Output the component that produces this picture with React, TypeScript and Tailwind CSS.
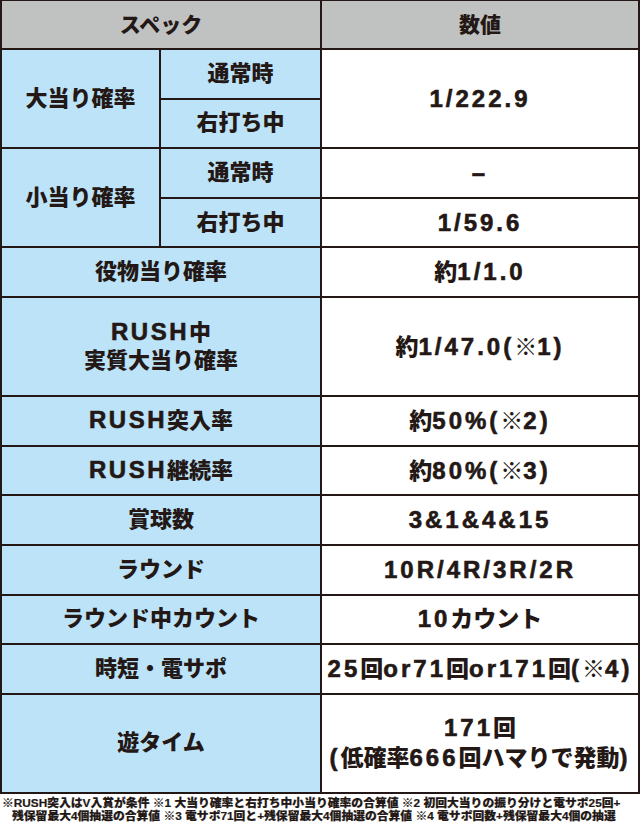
import type { ReactNode } from 'react';

const FONT = { fontFamily: '"Liberation Sans", "Noto Sans CJK JP", sans-serif' };

// Latin run inside a value cell: wider tracking like the print font
function L({ children }: { children: ReactNode }) {
  return <span className="text-[24px] tracking-[3px] [-webkit-text-stroke:0.6px_#231815]">{children}</span>;
}

function Head({ children, className = '' }: { children: ReactNode; className?: string }) {
  return (
    <div className={`flex items-center justify-center bg-[#c0c1c1] text-[21px] font-black ${className}`}>
      {children}
    </div>
  );
}

function Label({ children, className = '' }: { children: ReactNode; className?: string }) {
  return (
    <div className={`flex items-center justify-center bg-[#bce3f8] text-center text-[22px] font-black leading-[28px] ${className}`}>
      {children}
    </div>
  );
}

function Value({ children, className = '' }: { children: ReactNode; className?: string }) {
  return (
    <div className={`flex items-center justify-center bg-white text-center text-[23px] font-black leading-[30px] ${className}`}>
      {children}
    </div>
  );
}

function R({ children }: { children: ReactNode }) {
  return <span className="text-[24px] tracking-[2.5px] [-webkit-text-stroke:0.6px_#231815]">{children}</span>;
}

export default function App() {
  return (
    <div className="w-[640px] bg-white text-[#231815]" style={FONT}>
      <div className="grid w-[640px] grid-cols-[157px_159px_316px] grid-rows-[47px_repeat(15,47.6px)] gap-[2px] bg-[#231815] px-[2px] pt-[1px] pb-[2px]">
        <Head className="col-span-2">スペック</Head>
        <Head>数値</Head>

        {/* 大当り確率 */}
        <Label className="row-span-2">大当り確率</Label>
        <Label>通常時</Label>
        <Value className="row-span-2">
          <L>1/222.9</L>
        </Value>
        <Label>右打ち中</Label>

        {/* 小当り確率 */}
        <Label className="row-span-2">小当り確率</Label>
        <Label>通常時</Label>
        <Value>
          <L>–</L>
        </Value>
        <Label>右打ち中</Label>
        <Value>
          <L>1/59.6</L>
        </Value>

        <Label className="col-span-2">役物当り確率</Label>
        <Value>
          約<L>1/1.0</L>
        </Value>

        <Label className="col-span-2 row-span-2">
          <div>
            <R>RUSH</R>中
            <br />
            実質大当り確率
          </div>
        </Label>
        <Value className="row-span-2">
          約<L>1/47.0(</L>※<L>1)</L>
        </Value>

        <Label className="col-span-2">
          <span>
            <R>RUSH</R>突入率
          </span>
        </Label>
        <Value>
          約<L>50%(</L>※<L>2)</L>
        </Value>

        <Label className="col-span-2">
          <span>
            <R>RUSH</R>継続率
          </span>
        </Label>
        <Value>
          約<L>80%(</L>※<L>3)</L>
        </Value>

        <Label className="col-span-2">賞球数</Label>
        <Value>
          <L>3&amp;1&amp;4&amp;15</L>
        </Value>

        <Label className="col-span-2">ラウンド</Label>
        <Value>
          <L>10R/4R/3R/2R</L>
        </Value>

        <Label className="col-span-2">ラウンド中カウント</Label>
        <Value>
          <span>
            <L>10</L>カウント
          </span>
        </Value>

        <Label className="col-span-2">時短・電サポ</Label>
        <Value>
          <span className="whitespace-nowrap">
            <L>25</L>回<L>or71</L>回<L>or171</L>回<L>(</L>※<L>4)</L>
          </span>
        </Value>

        <Label className="col-span-2 row-span-2">遊タイム</Label>
        <Value className="row-span-2">
          <div className="whitespace-nowrap">
            <L>171</L>回
            <br />
            <L>(</L>低確率<L>666</L>回ハマりで発動<L>)</L>
          </div>
        </Value>
      </div>

      {/* 注釈 */}
      <div className="pt-[3px] text-[11.8px] font-black leading-[13px] whitespace-nowrap [-webkit-text-stroke:0.2px_#231815]">
        <div className="pl-[2px]">
          ※RUSH突入はV入賞が条件 ※1 大当り確率と右打ち中小当り確率の合算値 ※2 初回大当りの振り分けと電サポ25回+
        </div>
        <div className="pl-[12px]">
          残保留最大4個抽選の合算値 ※3 電サポ71回と+残保留最大4個抽選の合算値 ※4 電サポ回数+残保留最大4個の抽選
        </div>
      </div>
    </div>
  );
}
